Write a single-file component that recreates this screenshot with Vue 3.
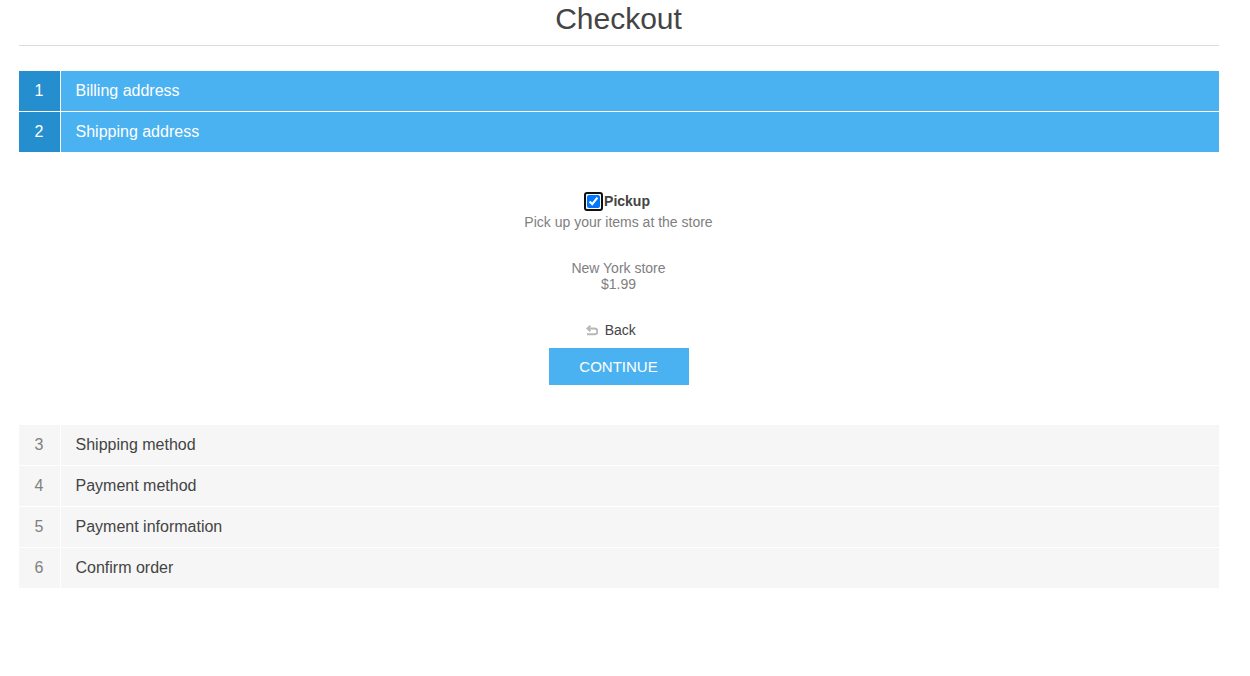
<script setup>
import { onMounted, ref } from "vue";

const doneSteps = [
  { num: 1, title: "Billing address" },
  { num: 2, title: "Shipping address" },
];
const nextSteps = [
  { num: 3, title: "Shipping method" },
  { num: 4, title: "Payment method" },
  { num: 5, title: "Payment information" },
  { num: 6, title: "Confirm order" },
];

const pickup = ref(null);

// the reference shows the checkbox with its keyboard focus ring
onMounted(() => {
  pickup.value.focus();
});
</script>

<template>
  <div class="page">
    <div class="page-title">
      <h1>Checkout</h1>
    </div>

    <ol class="steps done">
      <li v-for="step in doneSteps" :key="step.num" class="step">
        <span class="number">{{ step.num }}</span>
        <span class="title">{{ step.title }}</span>
      </li>
    </ol>

    <div class="shipping">
      <div class="option">
        <label class="option-name">
          <input ref="pickup" type="checkbox" checked />
          <span>Pickup</span>
        </label>
        <p class="option-desc">Pick up your items at the store</p>
      </div>
      <div class="store">
        <div>New York store</div>
        <div>$1.99</div>
      </div>
      <a class="back" href="#">
        <svg width="12" height="11" viewBox="0 0 12 11" fill="none" stroke="#b8b8b8" stroke-width="2">
          <path d="M4.5 0.8 1.5 3.5 4.5 6.2" />
          <path d="M2 3.5h6.5a2.8 2.8 0 0 1 0 5.8H1" />
        </svg>
        <span>Back</span>
      </a>
      <button class="continue" type="button">CONTINUE</button>
    </div>

    <ol class="steps">
      <li v-for="step in nextSteps" :key="step.num" class="step">
        <span class="number">{{ step.num }}</span>
        <span class="title">{{ step.title }}</span>
      </li>
    </ol>
  </div>
</template>

<style>
html,
body {
  background: #fff;
}
</style>

<style scoped>
.page {
  width: 1200px;
  margin-left: 18.5px;
  font-family: "Liberation Sans", Arial, sans-serif;
  font-size: 14px;
  color: #444;
}

.page-title {
  height: 45px;
  border-bottom: 1px solid #ddd;
  margin-bottom: 25px;
  text-align: center;
}

.page-title h1 {
  margin: 0;
  font-size: 30px;
  font-weight: 400;
  line-height: 38px;
}

.steps {
  list-style: none;
  margin: 0;
  padding: 0;
}

.step {
  display: flex;
  height: 40px;
  margin-bottom: 1px;
  line-height: 40px;
  font-size: 16px;
}

.number {
  box-sizing: border-box;
  width: 42px;
  border-right: 1px solid #fff;
  background: #f6f6f6;
  text-align: center;
  color: #808080;
}

.title {
  flex: 1;
  padding-left: 15px;
  background: #f6f6f6;
  color: #444;
}

.done .number {
  background: #248ece;
  color: #fff;
}

.done .title {
  background: #4ab2f1;
  color: #fff;
}

.shipping {
  display: flex;
  flex-direction: column;
  align-items: center;
  padding-top: 39px;
  height: 272px;
  box-sizing: border-box;
}

.option {
  text-align: center;
}

.option-name {
  display: flex;
  align-items: center;
  justify-content: center;
  height: 18px;
  font-weight: 700;
  line-height: 18px;
}

.option-name input {
  width: 13px;
  height: 13px;
  margin: 0 4px 0 0;
}

.option-desc {
  margin: 4px 0 0;
  line-height: 16px;
  color: #808080;
}

.store {
  margin-top: 30px;
  line-height: 16px;
  color: #808080;
  text-align: center;
}

.back {
  display: flex;
  align-items: center;
  gap: 6.5px;
  margin-top: 30px;
  padding-right: 15px;
  line-height: 16px;
  color: #444;
  text-decoration: none;
}

.continue {
  width: 140px;
  height: 37px;
  margin-top: 10px;
  flex-shrink: 0;
  border: 0;
  background: #4ab2f1;
  color: #fff;
  font-family: inherit;
  font-size: 15px;
}
</style>
